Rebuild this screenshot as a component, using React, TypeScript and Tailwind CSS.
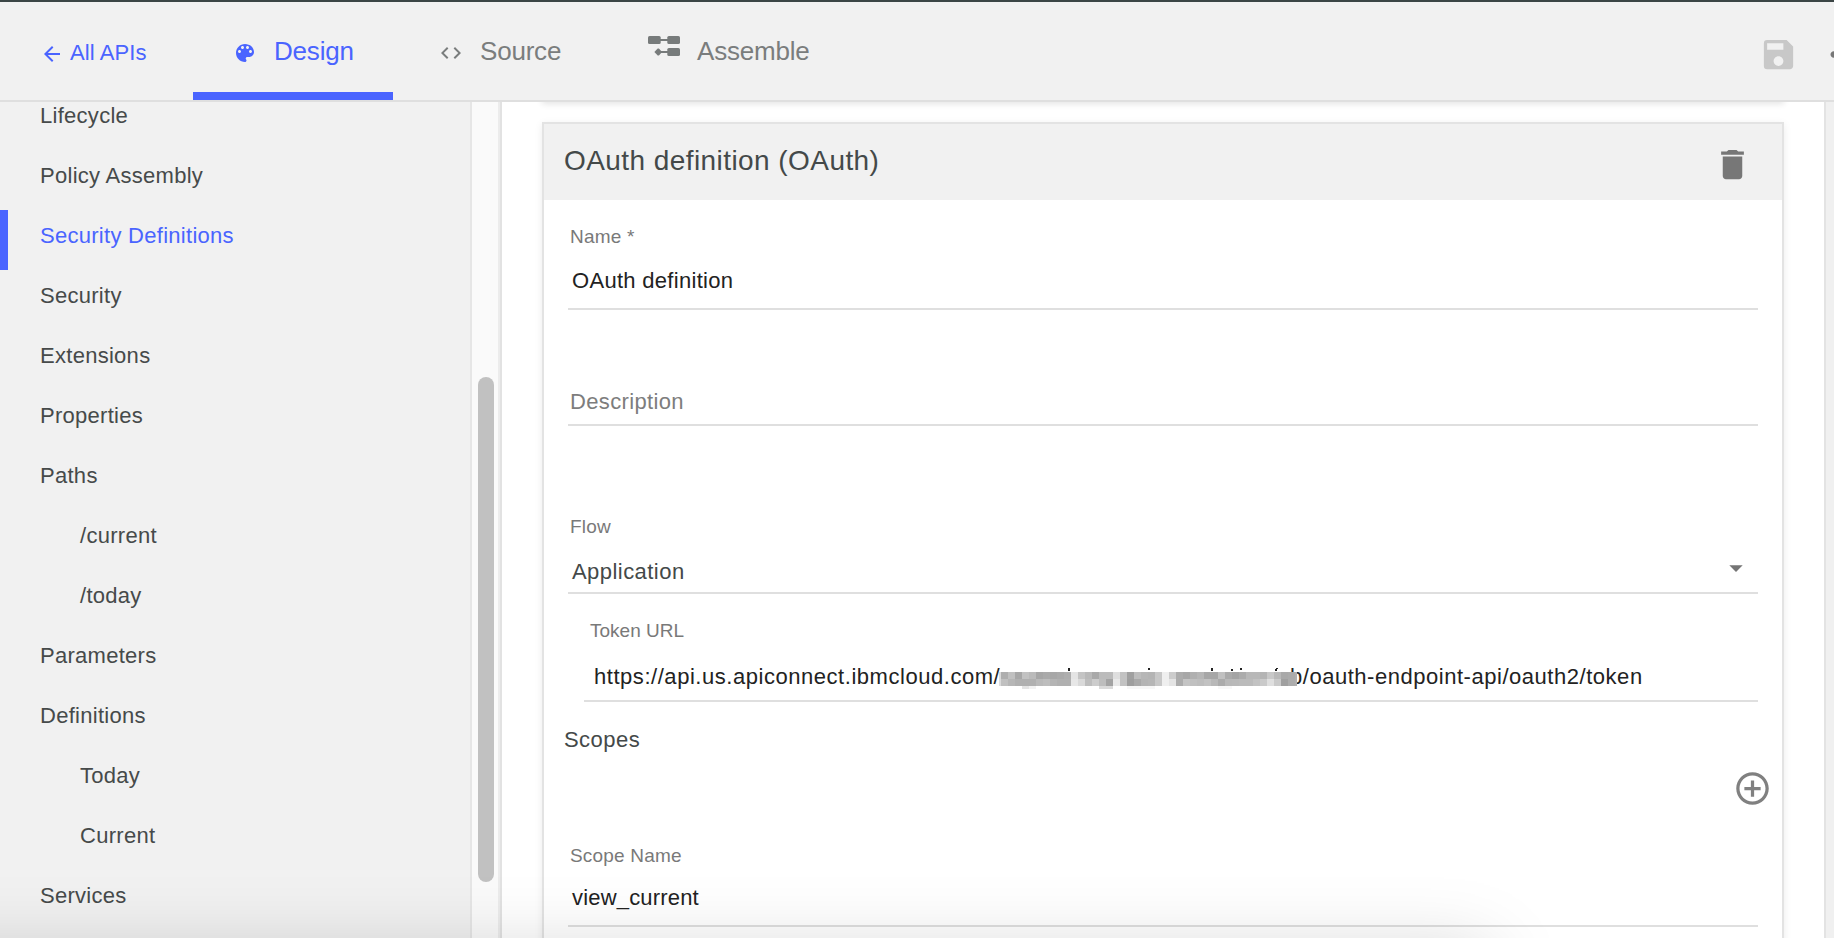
import React from "react";
import {
  MdAddCircleOutline,
  MdArrowBack,
  MdArrowDropDown,
  MdCode,
  MdDelete,
  MdMoreHoriz,
  MdSave,
} from "react-icons/md";

const navItems = [
  { label: "Lifecycle" },
  { label: "Policy Assembly" },
  { label: "Security Definitions", active: true },
  { label: "Security" },
  { label: "Extensions" },
  { label: "Properties" },
  { label: "Paths" },
  { label: "/current", nested: true },
  { label: "/today", nested: true },
  { label: "Parameters" },
  { label: "Definitions" },
  { label: "Today", nested: true },
  { label: "Current", nested: true },
  { label: "Services" },
];

// Grey levels of the two mosaic rows that hide the organisation name.
const mosaicTop =
  "a8 bb a0 bd b5 9f a3 a0 a3 a8 e2 c0 b4 a2 b6 b6 dc bd 98 b8 b0 ae c4 ee c8 a6 a0 aa b0 a0 a0 bb a3 9d a5 b3 b3 ae c4 b4 a2 a4".split(" ");
const mosaicBottom =
  "bb b0 aa aa aa b4 b8 ae aa aa e6 d6 b8 c8 b8 9c e8 bd 96 a2 ae b0 c4 ee e2 a5 c0 bb b8 bd b2 a4 b2 b4 b6 b6 bd c6 dd c6 98 a6".split(" ");

function Mosaic() {
  return (
    <svg className="absolute top-1 left-0" width="298" height="24" viewBox="0 0 298 24" shapeRendering="crispEdges">
      <g fill="#222">
        <rect x="69" y="1" width="2" height="3" />
        <rect x="149" y="1" width="2" height="2" />
        <rect x="212" y="1" width="2" height="3" />
        <rect x="232" y="2" width="2" height="2" />
        <rect x="241" y="1" width="2" height="2" />
        <path d="M276 4l1-3h2l-1 3z" />
      </g>
      <rect x="0" y="5" width="298" height="14" fill="#fff" />
      <g opacity="0.92">
        <rect x="0" y="5" width="2" height="14" fill="#d8d8d8" />
        <rect x="296" y="5" width="2" height="14" fill="#aaa" />
        {mosaicTop.map((v, i) => (
          <rect key={i} x={2 + i * 7} y="5" width="7" height="7" fill={`#${v}${v}${v}`} />
        ))}
        {mosaicBottom.map((v, i) => (
          <rect key={i} x={2 + i * 7} y="12" width="7" height="7" fill={`#${v}${v}${v}`} />
        ))}
      </g>
      <rect x="23" y="19" width="7" height="3" fill="#e4e4e4" />
      <rect x="30" y="19" width="7" height="3" fill="#f2f2f2" />
      <rect x="100" y="19" width="14" height="3" fill="#dadada" />
      <rect x="128" y="19" width="28" height="3" fill="#f7f7f7" />
      <rect x="219" y="19" width="14" height="3" fill="#f8f8f8" />
    </svg>
  );
}

function PaletteIcon() {
  return (
    <svg className="mt-1.5 mr-[17px] size-6" viewBox="0 0 24 24" fill="currentColor">
      <path d="M12 3c-4.970 0-9 4.030-9 9s4.030 9 9 9c.83 0 1.500-.67 1.500-1.500 0-.39-.15-.74-.39-1.010-.23-.26-.38-.61-.38-.99 0-.83.67-1.500 1.500-1.500H16c2.760 0 5-2.240 5-5 0-4.420-4.030-8-9-8zm-5.500 9c-.83 0-1.500-.67-1.500-1.500S5.670 9 6.500 9 8 9.670 8 10.500 7.330 12 6.500 12zm3-4C8.670 8 8 7.330 8 6.500S8.670 5 9.500 5s1.500.67 1.500 1.500S10.330 8 9.500 8zm5 0c-.83 0-1.500-.67-1.500-1.500S13.670 5 14.500 5s1.500.67 1.500 1.500S15.330 8 14.500 8zm3 4c-.83 0-1.500-.67-1.500-1.500S16.670 9 17.500 9s1.500.67 1.500 1.500-.67 1.500-1.500 1.500z" />
    </svg>
  );
}

function AssembleIcon() {
  return (
    <svg width="32" height="20" viewBox="0 0 32 20" fill="currentColor">
      <rect x="0" y="0" width="12.7" height="8" rx="1.6" />
      <rect x="19.3" y="0" width="12.7" height="8" rx="1.6" />
      <rect x="19.3" y="12" width="12.7" height="8" rx="1.6" />
      <path d="M12 3h8v2h-8zM12 15h8v2h-8z" />
      <path d="M6.4 16l3.3-3.6h1.200l2.300 2.600v2l-2.300 2.600h-1.200z" />
    </svg>
  );
}

function Header() {
  return (
    <header className="flex h-[102px] shrink-0 border-t-2 border-b-2 border-t-[#3b4545] border-b-[#dfdfdf] bg-[#f1f1f1] whitespace-nowrap">
      <a className="flex w-[193px] items-start pt-[38px] pl-10 text-[22px] leading-7 tracking-[0.1px] text-[#4a64ff]">
        <MdArrowBack className="mt-0.5 mr-1.5 size-6" />
        <span className="-mt-px">All APIs</span>
      </a>
      <nav className="flex text-[26px] leading-8 tracking-[-0.2px] text-[#7a7d7d]">
        <a className="flex w-[207px] items-start">
          <span className="flex h-full w-[200px] items-start border-b-8 border-[#4a64ff] pt-[33px] pl-10 text-[#4a64ff]">
            <PaletteIcon />
            Design
          </span>
        </a>
        <a className="flex w-[208px] items-start pt-[33px] pl-[39px]">
          <MdCode className="mt-1.5 mr-[17px] size-6" />
          Source
        </a>
        <a className="flex items-start gap-[17px] pt-[33px] pl-10">
          <span className="mt-px text-[#777b7b]"><AssembleIcon /></span>
          Assemble
        </a>
      </nav>
      <div className="ml-auto flex w-[75px] shrink-0 gap-[26px] overflow-hidden pt-[33px]">
        <MdSave className="size-[39px] shrink-0 text-[#c8c8c8]" />
        <MdMoreHoriz className="size-[39px] shrink-0 text-[#777]" />
      </div>
    </header>
  );
}

function Sidebar() {
  return (
    <aside className="flex w-[502px] shrink-0 overflow-hidden">
      <ul className="-mt-3 w-[472px] border-r-2 border-[#e6e6e6] bg-[#f1f1f1] text-[22px] tracking-[0.28px] text-[#464a4a]">
        {navItems.map((item) => (
          <li
            key={item.label}
            className={
              item.active
                ? "flex h-[60px] items-center border-l-8 border-[#4a64ff] pb-2.5 pl-8 text-[#4a64ff]"
                : item.nested
                  ? "flex h-[60px] items-center pb-2.5 pl-20"
                  : "flex h-[60px] items-center pb-2.5 pl-10"
            }
          >
            {item.label}
          </li>
        ))}
      </ul>
      <div className="w-7 border-r-2 border-[#ececec] bg-[#fafafa] pt-[275px] pl-1.5">
        <div className="h-[505px] w-4 rounded-full bg-[#c1c1c1]" />
      </div>
      <div className="w-0.5 bg-[#e2e2e2]" />
    </aside>
  );
}

function Label({ children }: { children: React.ReactNode }) {
  return <div className="h-6 pt-px pl-0.5 text-[19px] leading-6 tracking-[0.2px] text-[#797979]">{children}</div>;
}

function OAuthCard() {
  return (
    <section className="ml-10 h-[850px] w-[1242px] border-2 border-[#e3e3e3] bg-white shadow-[0_2px_8px_rgba(0,0,0,0.08)]">
      <div className="flex h-[76px] items-center justify-between bg-[#f1f1f1] pr-[30px] pl-5">
        <h2 className="pb-[3px] text-[28px] tracking-[0.43px] text-[#444949]">OAuth definition (OAuth)</h2>
        <MdDelete className="mt-1 size-[39px] text-[#777]" />
      </div>
      <div className="pt-6 pr-6 pl-6 text-[22px] leading-7 tracking-[0.45px] whitespace-nowrap text-[#222]">
        <div className="border-b-2 border-[#dfdfdf] pb-[13px]">
          <Label>Name *</Label>
          <div className="mt-[19px] pl-1 tracking-[0.3px]">OAuth definition</div>
        </div>
        <div className="mt-[78px] border-b-2 border-[#dfdfdf] pb-2 pl-0.5 tracking-[0.35px] text-[#7d7d7d]">Description</div>
        <div className="mt-[88px] border-b-2 border-[#dfdfdf] pb-1.5">
          <Label>Flow</Label>
          <div className="mt-5 flex h-7 items-start justify-between pr-1.5 pl-1 text-[#444949]">
            Application
            <MdArrowDropDown className="-mt-1.5 size-8 text-[#757575]" />
          </div>
        </div>
        <div className="mt-6 ml-4 border-b-2 border-[#dfdfdf] pb-[9px]">
          <div className="h-6 pt-px pl-1.5 text-[19px] leading-6 tracking-[0px] text-[#797979]">Token URL</div>
          <div className="mt-[21px] flex h-7 pl-[9px]">
            <span className="w-[406px] pl-px tracking-[0.54px]">https://api.us.apiconnect.ibmcloud.com/</span>
            <span className="relative w-[291px]">
              <span className="absolute top-0 left-0 z-10 h-7">
                <Mosaic />
              </span>
            </span>
            <span className="tracking-[0.53px]">b/oauth-endpoint-api/oauth2/token</span>
          </div>
        </div>
        <h3 className="mt-6 -ml-1 text-[#444949]">Scopes</h3>
        <div className="-mr-[14px] mt-[15px] flex h-[39px] justify-end">
          <MdAddCircleOutline className="size-[39px] text-[#808080]" />
        </div>
        <div className="mt-[35px] border-b-2 border-[#dfdfdf] pb-[13px]">
          <Label>Scope Name</Label>
          <div className="mt-[17px] pl-1 tracking-[0.18px]">view_current</div>
        </div>
      </div>
    </section>
  );
}

export default function App() {
  return (
    <div className="relative flex h-[938px] w-[1834px] flex-col overflow-hidden bg-white font-['Liberation_Sans',Arial,sans-serif]">
      <Header />
      <div className="flex min-h-0 flex-1">
        <Sidebar />
        <main className="min-w-0 flex-1 overflow-hidden">
          <div className="-mt-4 mb-5 ml-10 h-4 w-[1242px] bg-white shadow-[0_2px_6px_rgba(0,0,0,0.11)]" />
          <OAuthCard />
        </main>
        <div className="w-2.5 border-l-2 border-[#e3e3e3] bg-[#f0f0f0]" />
      </div>
      <div className="pointer-events-none absolute top-[950px] -left-40 z-20 h-60 w-[1650px] shadow-[0_0_70px_rgba(0,0,0,0.17)]" />
    </div>
  );
}
